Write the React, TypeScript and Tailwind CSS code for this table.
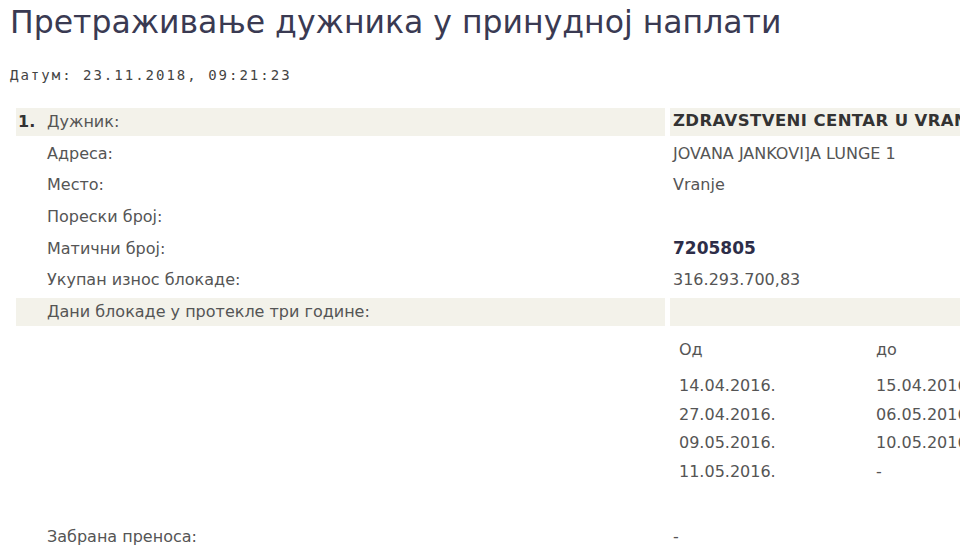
const rows = [
  { label: "Адреса:", value: "JOVANA JANKOVI]A LUNGE 1" },
  { label: "Место:", value: "Vranje" },
  { label: "Порески број:", value: "" },
];

const periods = [
  { from: "14.04.2016.", to: "15.04.2016." },
  { from: "27.04.2016.", to: "06.05.2016." },
  { from: "09.05.2016.", to: "10.05.2016." },
  { from: "11.05.2016.", to: "-" },
];

const font = { fontFamily: "'DejaVu Sans', 'Liberation Sans', sans-serif" };

export default function App() {
  return (
    <div className="h-[560px] w-[960px] overflow-hidden bg-white" style={font}>
      <h1 className="pl-[10px] pt-[1px] text-[31.5px] leading-[42px] text-[#3a3a52]">
        Претраживање дужника у принудној наплати
      </h1>
      <p className="mt-[22px] pl-[10px] font-['DejaVu_Sans_Mono',monospace] text-[14px] leading-[20px] tracking-[2px] text-[#444]">
        Датум: 23.11.2018, 09:21:23
      </p>

      <div className="mt-[23px] w-[1200px] text-[16px] text-[#555]">
        <div className="grid grid-cols-[649px_1fr] gap-x-[5px] gap-y-[4px] pl-[16px]">
          <div className="flex h-[27.7px] items-center bg-[#f3f2ea]">
            <span className="w-[31px] pl-[2px] font-bold text-[#333]">1.</span>
            <span>Дужник:</span>
          </div>
          <div className="flex h-[27.7px] items-center bg-[#f3f2ea] pl-[3px] text-[16.5px] font-bold tracking-[0.4px] text-[#333]">
            ZDRAVSTVENI CENTAR U VRANJU
          </div>

          {rows.map((r) => (
            <Row key={r.label} label={r.label}>
              {r.value}
            </Row>
          ))}
          <Row label="Матични број:">
            <span className="text-[17px] font-bold text-[#2d2d48]">7205805</span>
          </Row>
          <Row label="Укупан износ блокаде:">316.293.700,83</Row>

          <div className="flex h-[27.7px] items-center bg-[#f3f2ea] pl-[31px]">
            Дани блокаде у протекле три године:
          </div>
          <div className="h-[27.7px] bg-[#f3f2ea]" />

          <div />
          <div className="pl-[9px] pt-[8px]">
            <div className="grid grid-cols-[197px_1fr]">
              <div className="h-[36px]">Од</div>
              <div className="h-[36px]">до</div>
              {periods.map((p) => (
                <Period key={p.from} from={p.from} to={p.to} />
              ))}
            </div>
          </div>

          <div className="mt-[31px] flex h-[27.7px] items-center pl-[31px]">Забрана преноса:</div>
          <div className="mt-[31px] flex h-[27.7px] items-center pl-[3px]">-</div>
        </div>
      </div>
    </div>
  );
}

const Row = ({ label, children }: { label: string; children?: React.ReactNode }) => (
  <>
    <div className="flex h-[27.7px] items-center pl-[31px]">{label}</div>
    <div className="flex h-[27.7px] items-center pl-[3px]">{children}</div>
  </>
);

const Period = ({ from, to }: { from: string; to: string }) => (
  <>
    <div className="h-[28.7px]">{from}</div>
    <div className="h-[28.7px]">{to}</div>
  </>
);
